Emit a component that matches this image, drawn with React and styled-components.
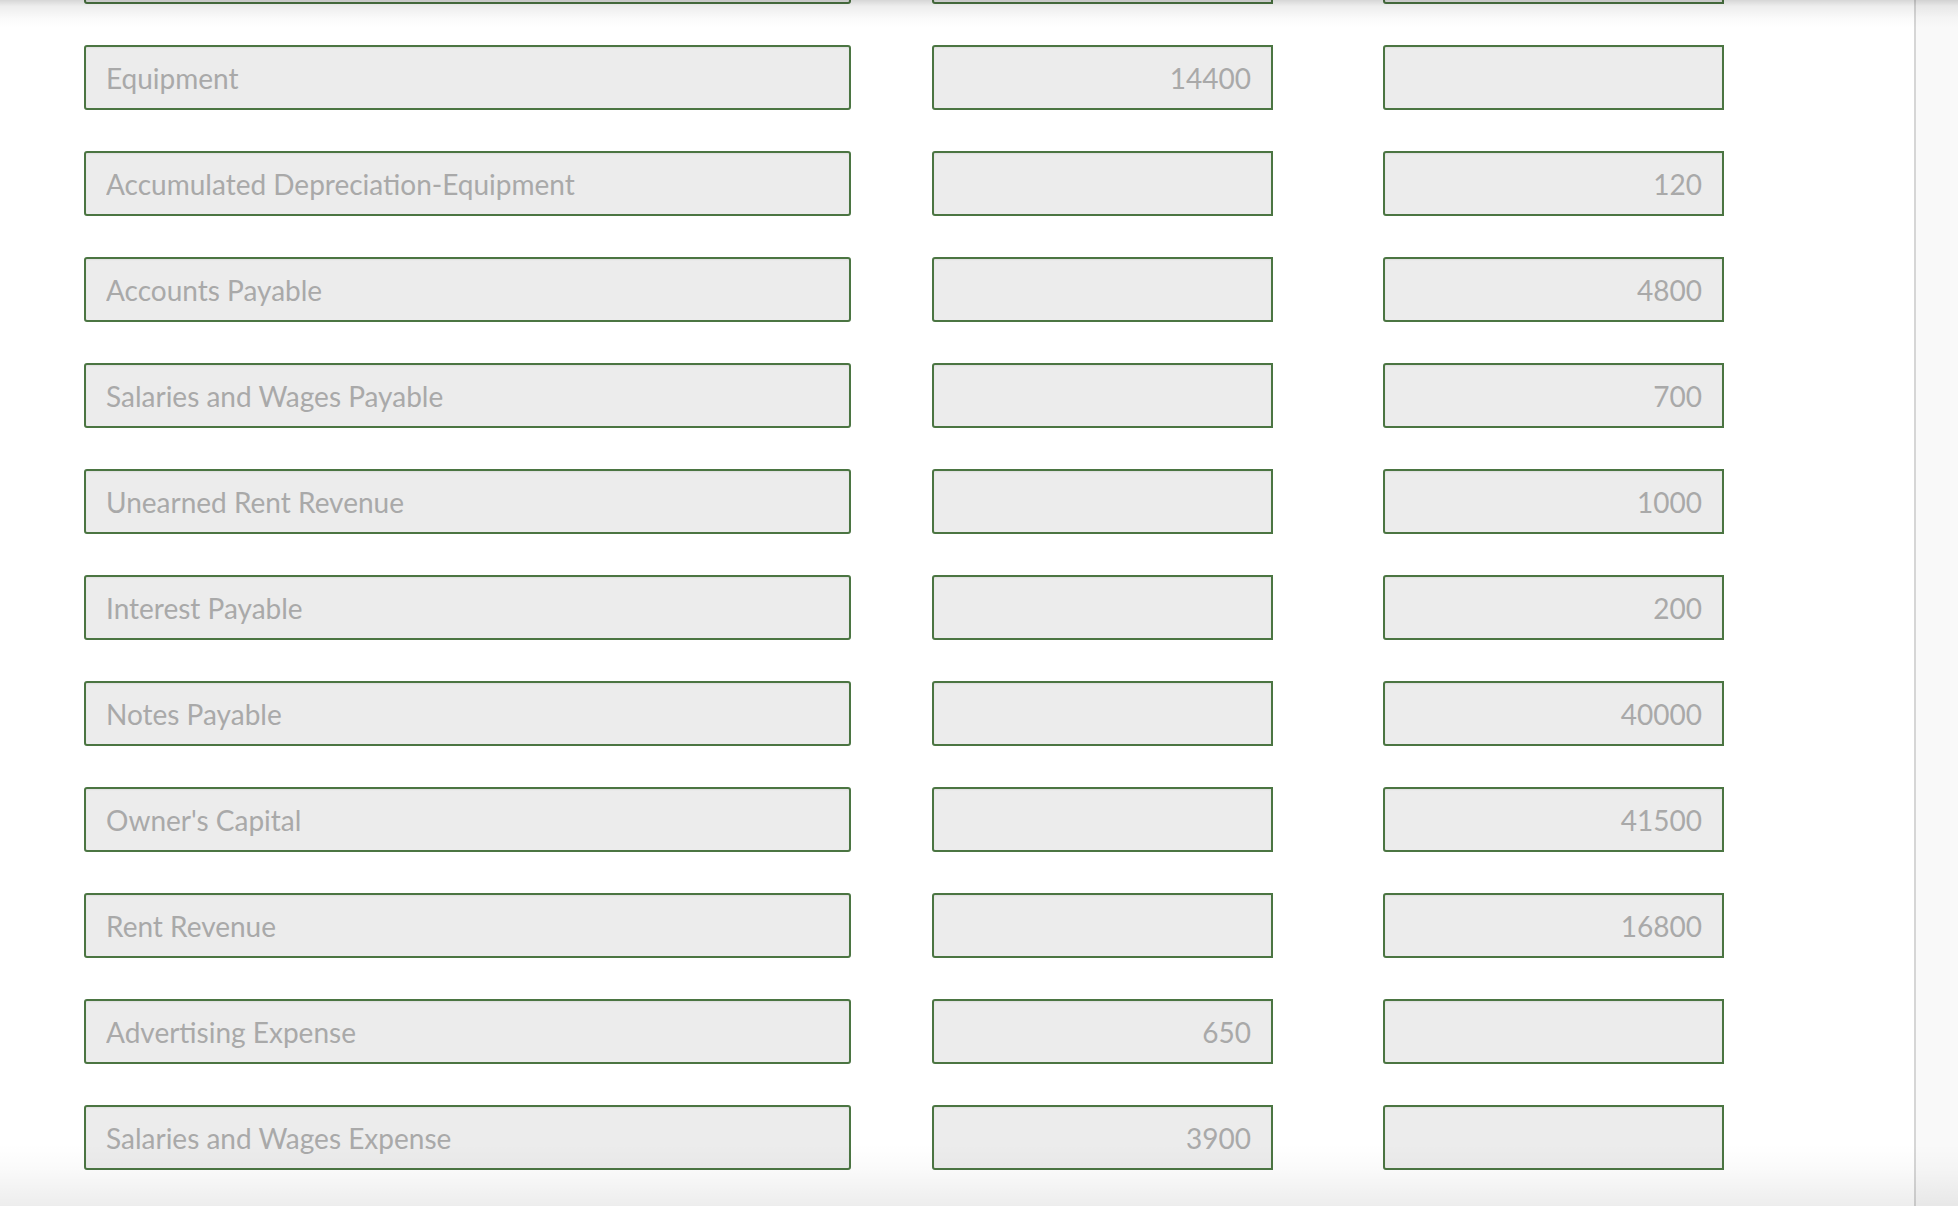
import React from "react";
import styled, { createGlobalStyle } from "styled-components";

const GlobalStyle = createGlobalStyle`
  html, body {
    margin: 0;
    padding: 0;
    height: 100%;
    background: #ffffff;
    overflow: hidden;
  }
  #root { height: 100%; }
`;

const Page = styled.div`
  position: relative;
  display: flex;
  width: 100%;
  height: 100vh;
  overflow: hidden;
  background: #ffffff;
  font-family: Lato, "Open Sans", "Liberation Sans", sans-serif;
`;

const Content = styled.main`
  flex: 1;
  min-width: 0;
  overflow: hidden;
`;

const RowList = styled.div`
  display: flex;
  flex-direction: column;
  gap: 41px;
  margin-top: -61px;
  padding-left: 84px;
`;

const Row = styled.div`
  display: grid;
  grid-template-columns: 767px 341px 341px;
  column-gap: 81px;
  & > :nth-child(3) { margin-left: 29px; }
`;

const Field = styled.input`
  box-sizing: border-box;
  width: 100%;
  height: 65px;
  margin: 0;
  padding: 0 20px;
  border: 2px solid #4b7542;
  border-radius: ${(p) => (p.$square ? "3px 0 0 3px" : "3px")};
  background: #ececec;
  color: #a9a9a9;
  font-family: Lato, "Open Sans", "Liberation Sans", sans-serif;
  font-size: 28px;
  text-align: ${(p) => (p.$numeric ? "right" : "left")};
  outline: none;
  box-shadow: inset 0 1px 2px rgba(0, 0, 0, 0.06);
`;

const ScrollTrack = styled.aside`
  flex: 0 0 42px;
  border-left: 2px solid #d6d6d6;
  background: #f9f9f9;
`;

const TopShade = styled.div`
  position: absolute;
  left: 0;
  right: 0;
  top: 0;
  height: 28px;
  pointer-events: none;
  background: linear-gradient(
    to bottom,
    rgba(0, 0, 0, 0.16) 0px,
    rgba(0, 0, 0, 0.07) 6px,
    rgba(0, 0, 0, 0.02) 18px,
    rgba(0, 0, 0, 0) 28px
  );
`;

const BottomShade = styled.div`
  position: absolute;
  left: 0;
  right: 0;
  bottom: 0;
  height: 62px;
  pointer-events: none;
  background: linear-gradient(
    to bottom,
    rgba(0, 0, 0, 0) 0px,
    rgba(0, 0, 0, 0.02) 25px,
    rgba(0, 0, 0, 0.07) 62px
  );
`;

const rows = [
  ["", "", ""],
  ["Equipment", "14400", ""],
  ["Accumulated Depreciation-Equipment", "", "120"],
  ["Accounts Payable", "", "4800"],
  ["Salaries and Wages Payable", "", "700"],
  ["Unearned Rent Revenue", "", "1000"],
  ["Interest Payable", "", "200"],
  ["Notes Payable", "", "40000"],
  ["Owner's Capital", "", "41500"],
  ["Rent Revenue", "", "16800"],
  ["Advertising Expense", "650", ""],
  ["Salaries and Wages Expense", "3900", ""],
];

export default function App() {
  return (
    <>
      <GlobalStyle />
      <Page>
        <Content>
          <RowList>
            {rows.map(([account, debit, credit], i) => (
              <Row key={i}>
                <Field readOnly value={account} />
                <Field readOnly value={debit} $numeric $square />
                <Field readOnly value={credit} $numeric $square />
              </Row>
            ))}
          </RowList>
        </Content>
        <ScrollTrack />
        <TopShade />
        <BottomShade />
      </Page>
    </>
  );
}
